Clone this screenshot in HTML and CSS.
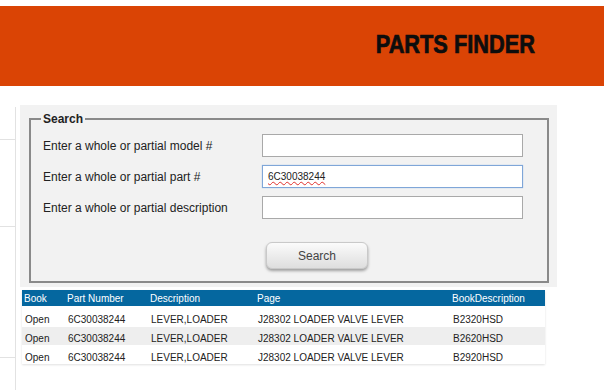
FILE: index.html
```html
<!DOCTYPE html>
<html lang="en">
<head>
    <meta charset="UTF-8">
    <meta name="viewport" content="width=device-width, initial-scale=1.0">
    <title>Parts Finder</title>
    <link rel="stylesheet" href="styles.css">
</head>
<body>
    <!-- header -->
    <div class="header">
        <h1 class="title">PARTS FINDER</h1>
    </div>

    <div class="main">
        <!-- left nav, cut off -->
        <ul class="side">
            <li style="height: 33px"></li>
            <li style="height: 87px"></li>
            <li style="height: 131px"></li>
            <li></li>
        </ul>

        <div class="content">
            <!-- search form -->
            <div class="panel">
                <fieldset>
                    <legend>Search</legend>
                    <div class="fields">
                        <label for="model">Enter a whole or partial model #</label>
                        <input id="model" type="text">
                        <label for="part">Enter a whole or partial part #</label>
                        <div class="input focus"><span class="typo">6C30038244</span></div>
                        <label for="desc">Enter a whole or partial description</label>
                        <input id="desc" type="text">
                    </div>
                    <button class="btn">Search</button>
                </fieldset>
            </div>

            <!-- results -->
            <table class="results">
                <thead>
                    <tr>
                        <th class="c-book">Book</th>
                        <th class="c-part">Part Number</th>
                        <th class="c-desc">Description</th>
                        <th class="c-page">Page</th>
                        <th>BookDescription</th>
                    </tr>
                </thead>
                <tbody>
                    <tr><td>Open</td><td>6C30038244</td><td>LEVER,LOADER</td><td>J28302 LOADER VALVE LEVER</td><td>B2320HSD</td></tr>
                    <tr><td>Open</td><td>6C30038244</td><td>LEVER,LOADER</td><td>J28302 LOADER VALVE LEVER</td><td>B2620HSD</td></tr>
                    <tr><td>Open</td><td>6C30038244</td><td>LEVER,LOADER</td><td>J28302 LOADER VALVE LEVER</td><td>B2920HSD</td></tr>
                </tbody>
            </table>
        </div>
    </div>
</body>
</html>
```

FILE: styles.css
```css
:root {
    --orange: #da4405;
    --blue: #05679f;
    --line: #e2e2e2;
    --panel: #f2f2f2;
}
* { box-sizing: border-box; }
body {
    margin: 0;
    font-family: "Liberation Sans", Arial, sans-serif;
    font-size: 12px;
    color: #222;
    background: #fff;
}
.header {
    margin-top: 6px;
    height: 80px;
    background-color: var(--orange);
    display: flex;
    align-items: center;
    justify-content: flex-end;
    padding-right: 69px;
}
.title {
    margin: 0 0 3px;
    font-size: 25px;
    font-weight: bold;
    color: #0d0d0d;
    -webkit-text-stroke: 0.7px #0d0d0d;
    transform: scaleX(0.87);
    transform-origin: right center;
}
.main { display: flex; }
.side {
    list-style: none;
    margin: 21px 0 0;
    padding: 0;
    width: 16px;
    min-height: 283px;
    border-right: 1px solid var(--line);
}
.side li { border-bottom: 1px solid var(--line); }
.side li:last-child { border-bottom: 0; }
.content { margin-left: 4px; margin-top: 19px; }

.panel {
    width: 537px;
    background-color: var(--panel);
    padding: 7px 8px 4px 9px;
}
fieldset {
    margin: 0;
    border: 2px solid #8a8a8a;
    padding: 8px 12px 12px;
}
legend {
    font-weight: bold;
    padding: 0 2px;
    margin-left: -2px;
    line-height: 14px;
}
.fields {
    display: grid;
    grid-template-columns: 219px 261px;
    row-gap: 8px;
    align-items: center;
}
label { color: #222; }
input, .input {
    height: 23px;
    border: 1px solid #a9a9a9;
    background: #fff;
    padding: 0 5px;
    font-family: "Liberation Sans", Arial, sans-serif;
    font-size: 10px;
    color: #222;
    outline: none;
}
.input { display: flex; align-items: center; }
.input.focus {
    border-color: #7fa6d8;
    box-shadow: 0 0 1px #9dbde6;
}
.typo {
    text-decoration: underline wavy #e0302c;
    text-decoration-thickness: 1px;
    text-underline-offset: 1px;
}
.btn {
    display: block;
    margin: 23px 0 0 223px;
    width: 102px;
    height: 27px;
    border: 1px solid #c9c9c9;
    border-radius: 6px;
    background-image: linear-gradient(#fbfbfb, #dedede);
    box-shadow: 0 2px 3px rgba(0, 0, 0, 0.35);
    font-family: "Liberation Sans", Arial, sans-serif;
    font-size: 12px;
    color: #444;
}

.results {
    margin: 3px 0 0 2px;
    width: 523px;
    border-collapse: collapse;
    font-size: 10px;
    box-shadow: 0 1px 2px rgba(0, 0, 0, 0.12);
}
.results th {
    background-color: var(--blue);
    color: #fff;
    font-weight: normal;
    text-align: left;
    height: 16px;
    padding: 1px 2px 0;
}
.results td {
    height: 19px;
    padding: 5px 3px 0;
    color: #222;
}
.results tbody tr:first-child td { height: 21px; }
.results tbody tr:nth-child(2) td { height: 18px; padding-top: 4px; }
.results tbody tr:nth-child(2) { background-color: #eee; }
.c-book { width: 43px; }
.c-part { width: 83px; }
.c-desc { width: 107px; }
.c-page { width: 195px; }
```
